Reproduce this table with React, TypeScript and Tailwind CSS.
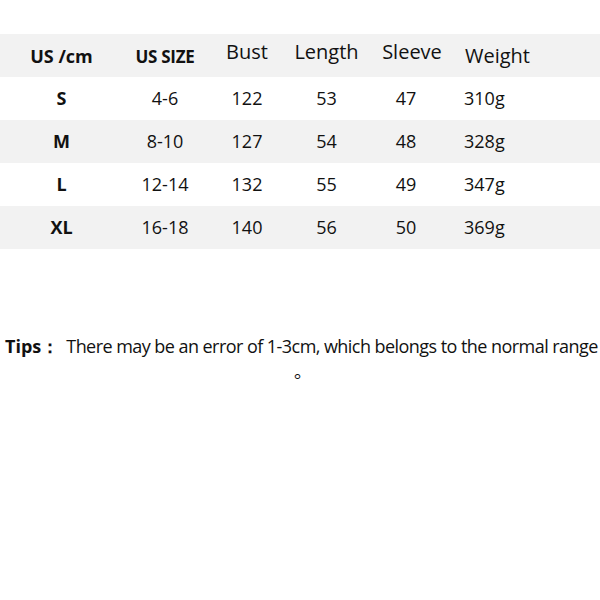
import React from "react";

const rows = [
  ["S", "4-6", "122", "53", "47", "310g"],
  ["M", "8-10", "127", "54", "48", "328g"],
  ["L", "12-14", "132", "55", "49", "347g"],
  ["XL", "16-18", "140", "56", "50", "369g"],
];

const grid = "grid grid-cols-[123px_84px_80px_79px_80px_1fr] items-center h-[43px]";

export default function App() {
  return (
    <div
      className="w-[600px] h-[600px] bg-white text-[#111] overflow-hidden"
      style={{ fontFamily: '"Open Sans", "Noto Sans", sans-serif' }}
    >
      <div className="pt-[34px]">
        <div className={`${grid} bg-[#f2f2f2]`}>
          <div className="text-center font-bold text-[18px] pt-[2px]">US /cm</div>
          <div className="text-center font-bold text-[17px] tracking-[-0.3px] pt-[2px]">US SIZE</div>
          <div className="text-center text-[20px] pb-[8px]">Bust</div>
          <div className="text-center text-[20px] pb-[8px]">Length</div>
          <div className="text-center text-[20px] pb-[8px] pl-[12px]">Sleeve</div>
          <div className="pl-[19px] text-[20px] pt-[1px]">Weight</div>
        </div>
        {rows.map((r, i) => (
          <div key={i} className={`${grid} ${i % 2 === 1 ? "bg-[#f2f2f2]" : "bg-white"}`}>
            <div className="text-center font-bold text-[18px]">{r[0]}</div>
            <div className="text-center text-[18px]">{r[1]}</div>
            <div className="text-center text-[18px]">{r[2]}</div>
            <div className="text-center text-[18px]">{r[3]}</div>
            <div className="text-center text-[18px]">{r[4]}</div>
            <div className="pl-[18px] text-[18px]">{r[5]}</div>
          </div>
        ))}
      </div>
      <div className="mt-[84px] pl-[5px] flex items-baseline text-[18px] whitespace-nowrap">
        <span className="font-bold">Tips：</span>
        <span className="ml-[7px] tracking-[-0.55px]">There may be an error of 1-3cm, which belongs to the normal range</span>
      </div>
      <div
        className="pl-[294px] text-[18px] leading-[20px] text-[#111]"
        style={{ fontFamily: '"Noto Sans CJK SC", sans-serif' }}
      >
        。
      </div>
    </div>
  );
}
